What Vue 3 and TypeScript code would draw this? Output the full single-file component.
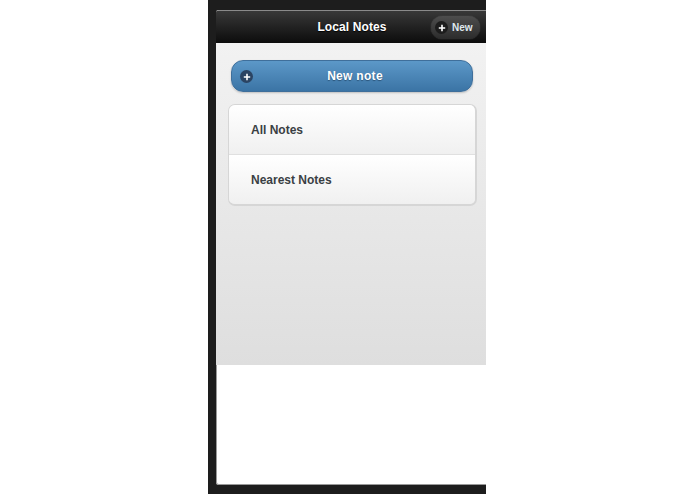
<script setup lang="ts">
const rows: string[] = ['All Notes', 'Nearest Notes']
</script>

<template>
  <div class="device">
    <div class="screen">
      <header class="bar">
        <h1 class="title">Local Notes</h1>
        <div class="bar-btn">
          <span class="dot small">
            <svg viewBox="0 0 10 10" width="8" height="8"><path d="M5 1v8M1 5h8" stroke="#fff" stroke-width="2" fill="none" /></svg>
          </span>
          <span class="bar-btn-text">New</span>
        </div>
      </header>
      <main class="content">
        <div class="new-btn">
          <span class="dot">
            <svg viewBox="0 0 10 10" width="8" height="8"><path d="M5 1v8M1 5h8" stroke="#fff" stroke-width="2" fill="none" /></svg>
          </span>
          <span class="new-text">New note</span>
        </div>
        <ul class="list">
          <li v-for="r in rows" :key="r" class="row">{{ r }}</li>
        </ul>
      </main>
      <div class="blank"></div>
    </div>
  </div>
</template>

<style>
html, body { margin: 0; background: #fff; }
</style>

<style scoped>
.device {
  box-sizing: border-box;
  width: 278px;
  height: 494px;
  margin-left: 208px;
  padding: 10px 0 9px 8px;
  background: #1d1d1d;
  font-family: "Liberation Sans", Arial, sans-serif;
  font-weight: bold;
}
.screen {
  height: 100%;
  display: flex;
  flex-direction: column;
  background: #fff;
  border-radius: 3px 0 0 3px;
  overflow: hidden;
  box-shadow: inset 1px 0 0 #999, inset 0 -1px 0 #999;
}
.bar {
  position: relative;
  box-sizing: border-box;
  height: 33px;
  flex: none;
  display: flex;
  align-items: center;
  justify-content: center;
  padding-left: 2px;
  padding-bottom: 1px;
  border-top: 1px solid #8a8a8a;
  background: linear-gradient(#383838, #0c0c0c);
}
.title {
  margin: 0;
  font-size: 12px;
  font-weight: bold;
  color: #fff;
  letter-spacing: 0.1px;
  text-shadow: 0 1px 1px #000;
}
.bar-btn {
  position: absolute;
  left: 215px;
  top: 5px;
  box-sizing: border-box;
  width: 49px;
  height: 23px;
  display: flex;
  align-items: center;
  gap: 4px;
  padding-left: 4px;
  border-radius: 12px;
  background: linear-gradient(#4d4d4d, #2c2c2c);
  box-shadow: 0 0 1px #666;
}
.bar-btn-text {
  font-size: 10px;
  color: #dfe8ee;
}
.dot {
  width: 13px;
  height: 13px;
  flex: none;
  display: flex;
  align-items: center;
  justify-content: center;
  border-radius: 50%;
  background: #2b4463;
}
.dot.small {
  background: #1c1c1c;
}
.content {
  box-sizing: border-box;
  height: 322px;
  flex: none;
  padding: 17px 9px 0 12px;
  background: linear-gradient(#f2f2f2, #dedede);
}
.new-btn {
  position: relative;
  box-sizing: border-box;
  width: 242px;
  margin-left: 3px;
  height: 32px;
  display: flex;
  align-items: center;
  justify-content: center;
  padding-left: 6px;
  border: 1px solid #3f6f9b;
  border-radius: 12px;
  background: linear-gradient(#5c98c8, #3b74a5);
  box-shadow: 0 1px 2px rgba(0, 0, 0, 0.2);
}
.new-btn .dot {
  position: absolute;
  left: 8px;
  top: 9px;
}
.new-text {
  font-size: 12px;
  color: #fff;
  letter-spacing: 0.3px;
  text-shadow: 0 1px 1px #2a5378;
}
.list {
  box-sizing: border-box;
  width: 249px;
  margin: 12px 0 0;
  padding: 0;
  list-style: none;
  border: 1px solid #d6d6d6;
  border-width: 1px 2px 2px 1px;
  border-radius: 7px;
  overflow: hidden;
}
.row {
  box-sizing: border-box;
  height: 49px;
  display: flex;
  align-items: center;
  padding-left: 22px;
  font-size: 12px;
  color: #3a3f44;
  background: linear-gradient(#fff, #f0f0f0);
}
.row + .row {
  height: 50px;
  border-top: 1px solid #e0e0e0;
}
.blank {
  flex: 1;
}
</style>
